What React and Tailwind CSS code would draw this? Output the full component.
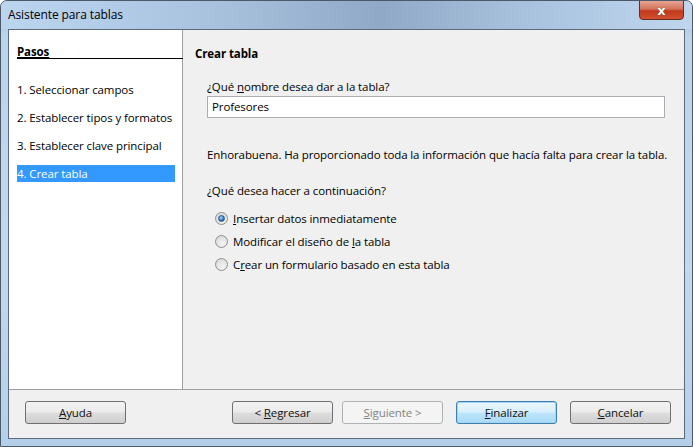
import React from 'react';

const font = { fontFamily: '"Segoe UI", "Open Sans", "Noto Sans", sans-serif', letterSpacing: '-0.1px' };

function Radio({ checked }) {
  return (
    <span className="relative inline-flex items-center justify-center w-[13px] h-[13px] rounded-full border border-[#8e8f8f] bg-[radial-gradient(circle_at_60%_70%,#f4f4f4,#d4d4d4)] shrink-0">
      {checked && (
        <span className="w-[7px] h-[7px] rounded-full bg-[radial-gradient(circle_at_40%_35%,#a8dcff,#1f5fa8_70%,#0d3a70)] border border-[#2a5b8e]" />
      )}
    </span>
  );
}

function Btn({ children, variant }) {
  let cls = 'border-[#707070] text-[#111] bg-[linear-gradient(#f2f2f2_0%,#ebebeb_48%,#dddddd_52%,#cfcfcf_100%)]';
  if (variant === 'default') cls = 'border-[#3c7fb1] text-[#111] bg-[linear-gradient(#eaf6fd_0%,#d9f0fc_48%,#bee6fd_52%,#a7d9f5_100%)] shadow-[inset_0_0_0_1px_#a6d3f0]';
  if (variant === 'disabled') cls = 'border-[#adb2b5] text-[#838383] bg-[#f4f4f4]';
  return (
    <div className={`w-[101px] h-[23px] rounded-[3px] border flex items-center justify-center ${cls}`}>
      {children}
    </div>
  );
}

export default function App() {
  return (
    <div style={font} className="w-[693px] h-[447px] relative overflow-hidden rounded-t-[7px] border border-[#4a5a6b] bg-[linear-gradient(180deg,#9fb9d6_0%,#bcd4ec_8%,#c2d8ee_60%,#b6cfe9_100%)] flex flex-col text-[11.5px]">
      {/* Title bar */}
      <div className="h-[28px] shrink-0 flex items-center pl-[7px] text-[12px] text-black bg-[linear-gradient(90deg,#bcd5ef_0%,#a9c3df_30%,#8fa9c6_55%,#a7c1dd_75%,#bfd6ee_100%)]">
        Asistente para tablas
      </div>
      {/* Close button */}
      <div className="absolute top-[-1px] left-[638px] w-[45px] h-[20px] rounded-b-[4px] border border-[#6b2b20] bg-[linear-gradient(#e8a493_0%,#d3725b_45%,#c2391a_55%,#d0502f_100%)] flex items-center justify-center">
        <span className="text-white font-bold text-[13px] leading-none" style={{ fontFamily: '"DejaVu Sans", sans-serif', textShadow: '0 0 1px #333' }}>x</span>
      </div>

      {/* Client */}
      <div className="mx-[7px] mb-[7px] flex-1 border border-[#5a6b7c] bg-[#f0f0f0] flex flex-col text-black">
        <div className="flex h-[360px] border-b border-[#a0a0a0]">
          {/* Sidebar */}
          <div className="w-[174px] shrink-0 bg-white border-r border-[#a0a0a0] pl-[8px] pt-[14px]">
            <div className="font-bold underline h-[14px] leading-[15px]">Pasos</div>
            <div className="border-b border-black -mr-[1px]" />
            <div className="mt-[22px] flex flex-col whitespace-nowrap">
              <div className="h-[28px] leading-[17px]">1. Seleccionar campos</div>
              <div className="h-[28px] leading-[17px]">2. Establecer tipos y formatos</div>
              <div className="h-[28px] leading-[17px]">3. Establecer clave principal</div>
              <div className="h-[17px] leading-[17px] w-[158px] bg-[#3399ff] text-white">4. Crear tabla</div>
            </div>
          </div>
          {/* Main */}
          <div className="flex-1 min-w-0 pl-[12px] pt-[15px]">
            <div className="font-bold h-[17px] leading-[17px]">Crear tabla</div>
            <div className="pl-[12px] mt-[16px]">
              <div className="h-[17px] leading-[17px]">¿Qué <span className="underline">n</span>ombre desea dar a la tabla?</div>
              <div className="mt-[1px] w-[458px] h-[22px] bg-white border border-[#abadb3] pl-[4px] leading-[20px]">Profesores</div>
              <div className="mt-[28px] h-[17px] leading-[17px] whitespace-nowrap">Enhorabuena. Ha proporcionado toda la información que hacía falta para crear la tabla.</div>
              <div className="mt-[19px] h-[17px] leading-[17px]">¿Qué desea hacer a continuación?</div>
              <div className="mt-[11px] pl-[8px] flex flex-col gap-[6px]">
                <div className="flex items-center gap-[5px] h-[17px]"><Radio checked /><span><span className="underline">I</span>nsertar datos inmediatamente</span></div>
                <div className="flex items-center gap-[5px] h-[17px]"><Radio /><span>Modificar el diseño de <span className="underline">l</span>a tabla</span></div>
                <div className="flex items-center gap-[5px] h-[17px]"><Radio /><span>C<span className="underline">r</span>ear un formulario basado en esta tabla</span></div>
              </div>
            </div>
          </div>
        </div>
        {/* Button bar */}
        <div className="flex items-center pl-[16px] pt-[11px]">
          <Btn><span><span className="underline">A</span>yuda</span></Btn>
          <div className="ml-[106px]"><Btn><span>&lt; <span className="underline">R</span>egresar</span></Btn></div>
          <div className="ml-[9px]"><Btn variant="disabled"><span><span className="underline">S</span>iguiente &gt;</span></Btn></div>
          <div className="ml-[13px]"><Btn variant="default"><span><span className="underline">F</span>inalizar</span></Btn></div>
          <div className="ml-[13px]"><Btn><span><span className="underline">C</span>ancelar</span></Btn></div>
        </div>
      </div>
    </div>
  );
}
